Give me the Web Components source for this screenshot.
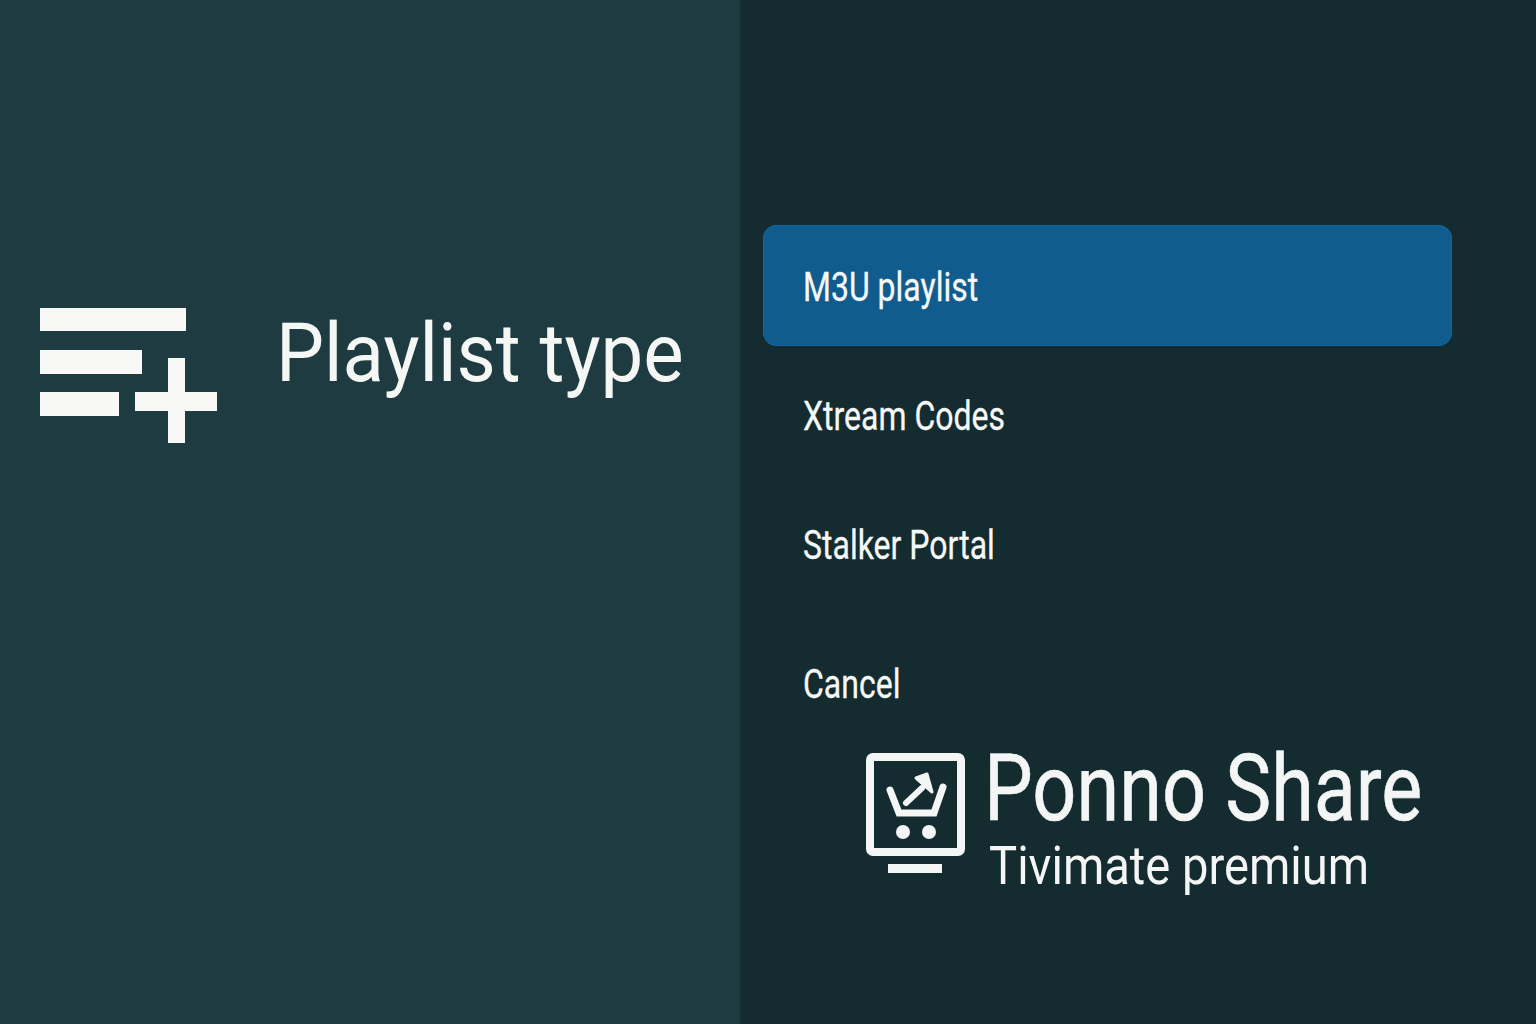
<!DOCTYPE html>
<html lang="en"><head><meta charset="utf-8"><title>Playlist type</title>
<style>html,body{margin:0;padding:0;height:100%;overflow:hidden}body{font-family:Roboto,"Liberation Sans",sans-serif;color:#f7f8f6}</style>
</head><body>
<playlist-screen>
  <title-panel slot="left">Playlist type</title-panel>
  <menu-item slot="right" selected>M3U playlist</menu-item>
  <menu-item slot="right">Xtream Codes</menu-item>
  <menu-item slot="right">Stalker Portal</menu-item>
  <menu-item slot="right" cancel>Cancel</menu-item>
  <brand-mark slot="right"></brand-mark>
</playlist-screen>
<script>
function def(name, html){
  customElements.define(name, class extends HTMLElement{
    constructor(){super();this.attachShadow({mode:'open'}).innerHTML=html;}
  });
}
def('playlist-screen',`<style>
:host{display:flex;width:1536px;height:1024px;overflow:hidden}
.l{width:740px;flex:none;background:#1e3b42}
.r{width:796px;box-sizing:border-box;flex:none;min-width:0;background:#142b2f;padding:225px 84px 0 23px;display:flex;flex-direction:column}
</style><div class="l"><slot name="left"></slot></div><div class="r"><slot name="right"></slot></div>`);
def('title-panel',`<style>
:host{display:flex;align-items:center;padding:307px 0 0 40px;gap:58px}
svg{display:block;flex:none}
.t{font-size:81px;line-height:92px;white-space:nowrap;display:inline-block;transform-origin:0 50%;transform:scaleX(.94);margin-top:-42px;color:#f5f7f5}
</style><svg width="178" height="136" viewBox="0 0 178 136" fill="#f8f9f7"><rect x="0" y="1" width="146" height="23"/><rect x="0" y="43" width="102" height="24"/><rect x="0" y="85" width="79" height="24"/><rect x="95" y="85" width="82" height="19"/><rect x="128" y="51" width="17" height="85"/></svg><span class="t"><slot></slot></span>`);
def('menu-item',`<style>
:host{display:flex;align-items:center;box-sizing:border-box;height:121px;margin-bottom:8px;padding-left:39.5px;border-radius:14px;color:#f6f8f8;font-size:40px;white-space:nowrap}
:host([selected]){background:#105c8f;box-shadow:inset 0 0 0 1px #14659b}
:host([cancel]){margin-top:10px;margin-bottom:0;height:121px}
span{display:inline-block;transform-origin:0 50%;transform:scaleX(.8);margin-top:4px;-webkit-text-stroke:.3px currentColor}
</style><span><slot></slot></span>`);
def('brand-mark',`<style>
:host{display:flex;gap:20px;padding-left:103px;margin-top:4px;color:#f4f6f5;min-width:0}
svg{display:block;flex:none;margin-top:6px}
.c{display:flex;flex-direction:column;width:0}
.a{font-size:92px;line-height:76px;margin-top:4px;white-space:nowrap;transform-origin:0 50%;transform:scaleX(.841);margin-left:-2px;-webkit-text-stroke:.6px currentColor}
.b{font-size:54px;line-height:60px;white-space:nowrap;transform-origin:0 50%;transform:scaleX(.873);margin:9px 0 0 3px}
</style><svg width="100" height="120" viewBox="0 0 100 120" fill="none" stroke="#f4f6f5" stroke-linejoin="round">
<rect x="4" y="4" width="91" height="95" rx="3" stroke-width="8"/>
<rect x="22" y="111" width="54" height="9" fill="#f4f6f5" stroke="none"/>
<path d="M24 37L33 60H68L77 34" stroke-width="7" stroke-linecap="round" stroke-linejoin="miter"/>
<path d="M40 50L56 35" stroke-width="6" stroke-linecap="round"/>
<path d="M50 25L61 21L66 39Z" fill="#f4f6f5" stroke="#f4f6f5" stroke-width="3"/>
<circle cx="37" cy="79" r="7" fill="#f4f6f5" stroke="none"/><circle cx="63" cy="79" r="7" fill="#f4f6f5" stroke="none"/>
</svg><div class="c"><div class="a">Ponno Share</div><div class="b">Tivimate premium</div></div>`);
</script>
</body></html>
